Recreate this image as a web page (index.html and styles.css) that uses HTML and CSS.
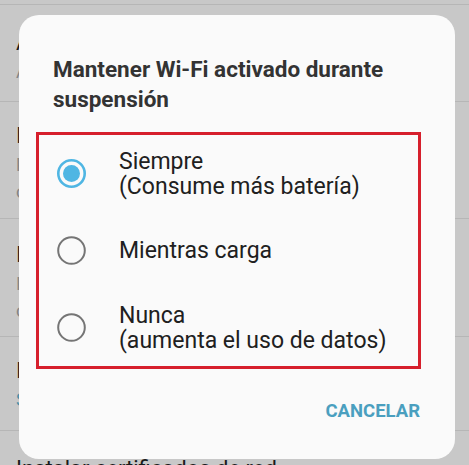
FILE: index.html
```html
<!DOCTYPE html>
<html lang="es">
<head>
<meta charset="utf-8">
<title>Wi-Fi avanzado</title>
<link rel="stylesheet" href="styles.css">
</head>
<body>
<div class="screen">
  <div class="list">
    <div class="item item-top"></div>
    <div class="item item-1">
      <div class="item-title">Abrir notificación de red</div>
      <div class="item-sub">Avisar cuando haya una red abierta</div>
    </div>
    <div class="item item-2">
      <div class="item-title">Intercambio inteligente de red</div>
      <div class="item-sub">Pasar a datos móviles cuando la conexión Wi-Fi sea inestable</div>
    </div>
    <div class="item item-3">
      <div class="item-title">Inactividad del Wi-Fi</div>
      <div class="item-sub">Impedir desconexiones y reducir el consumo de batería</div>
    </div>
    <div class="item item-4">
      <div class="item-title">Inactivo durante suspensión</div>
      <div class="item-sub link">Siempre</div>
    </div>
    <div class="item item-5">
      <div class="item-title">Instalar certificados de red</div>
    </div>
  </div>

  <div class="dialog">
    <h1 class="dialog-title">Mantener Wi-Fi activado durante suspensión</h1>
    <div class="options">
      <div class="option">
        <svg class="radio" viewBox="0 0 29 29" width="29" height="29">
          <circle cx="14.5" cy="14.5" r="13.2" fill="none" stroke="#4fb6e3" stroke-width="2.6"/>
          <circle cx="14.5" cy="14.5" r="8.5" fill="#4fb6e3"/>
        </svg>
        <div class="option-text">Siempre<br>(Consume más batería)</div>
      </div>
      <div class="option">
        <svg class="radio" viewBox="0 0 29 29" width="29" height="29">
          <circle cx="14.5" cy="14.5" r="13.3" fill="none" stroke="#757575" stroke-width="2"/>
        </svg>
        <div class="option-text">Mientras carga</div>
      </div>
      <div class="option">
        <svg class="radio" viewBox="0 0 29 29" width="29" height="29">
          <circle cx="14.5" cy="14.5" r="13.3" fill="none" stroke="#757575" stroke-width="2"/>
        </svg>
        <div class="option-text">Nunca<br>(aumenta el uso de datos)</div>
      </div>
    </div>
    <div class="actions">
      <span class="btn">CANCELAR</span>
    </div>
  </div>
</div>
</body>
</html>
```
FILE: styles.css
```css
* { box-sizing: border-box; }
html, body { margin: 0; padding: 0; }
body {
  width: 469px;
  height: 465px;
  overflow: hidden;
  background: #c8c8c8;
  font-family: Roboto, "Noto Sans", sans-serif;
}
.screen {
  position: relative;
  width: 469px;
  height: 465px;
  overflow: hidden;
}
.list {
  display: flex;
  flex-direction: column;
}
.item {
  border-bottom: 1px solid #b6b6b6;
  padding: 0 16px;
  white-space: nowrap;
  overflow: hidden;
}
.item-top { height: 5px; }
.item-1 { height: 97px; padding-top: 23px; }
.item-2 { height: 117px; padding-top: 19px; }
.item-3 { height: 118px; padding-top: 21px; }
.item-4 { height: 94px; padding-top: 19px; }
.item-5 { height: 80px; padding-top: 23px; border-bottom: none; }
.item-title {
  font-size: 22px;
  line-height: 30px;
  color: #1a1a1a;
}
.item-sub {
  font-size: 18px;
  line-height: 27px;
  color: #858585;
  white-space: normal;
  width: 300px;
}
.item-sub.link { color: #4b8ea6; }

.dialog {
  position: absolute;
  left: 19px;
  top: 15px;
  width: 436px;
  height: 444px;
  background: #fafafa;
  border-radius: 20px;
  padding-top: 39px;
  display: flex;
  flex-direction: column;
}
.dialog-title {
  margin: 0;
  padding: 0 30px 0 34px;
  font-size: 22.5px;
  line-height: 30px;
  font-weight: 700;
  color: #333333;
}
.options {
  margin: 18px 0 0 17px;
  width: 385px;
  height: 237px;
  border: 3px solid #d61f2c;
  display: grid;
  grid-template-rows: repeat(3, 1fr);
}
.option {
  display: flex;
  align-items: center;
  padding-left: 18px;
  gap: 33px;
}
.radio { flex: none; display: block; }
.option-text {
  font-size: 23px;
  line-height: 25px;
  color: #202020;
}
.actions {
  margin-top: 30px;
  padding-right: 35px;
  display: flex;
  justify-content: flex-end;
}
.btn {
  font-size: 18.5px;
  line-height: 24px;
  font-weight: 700;
  color: #4a9fbf;
}
```
